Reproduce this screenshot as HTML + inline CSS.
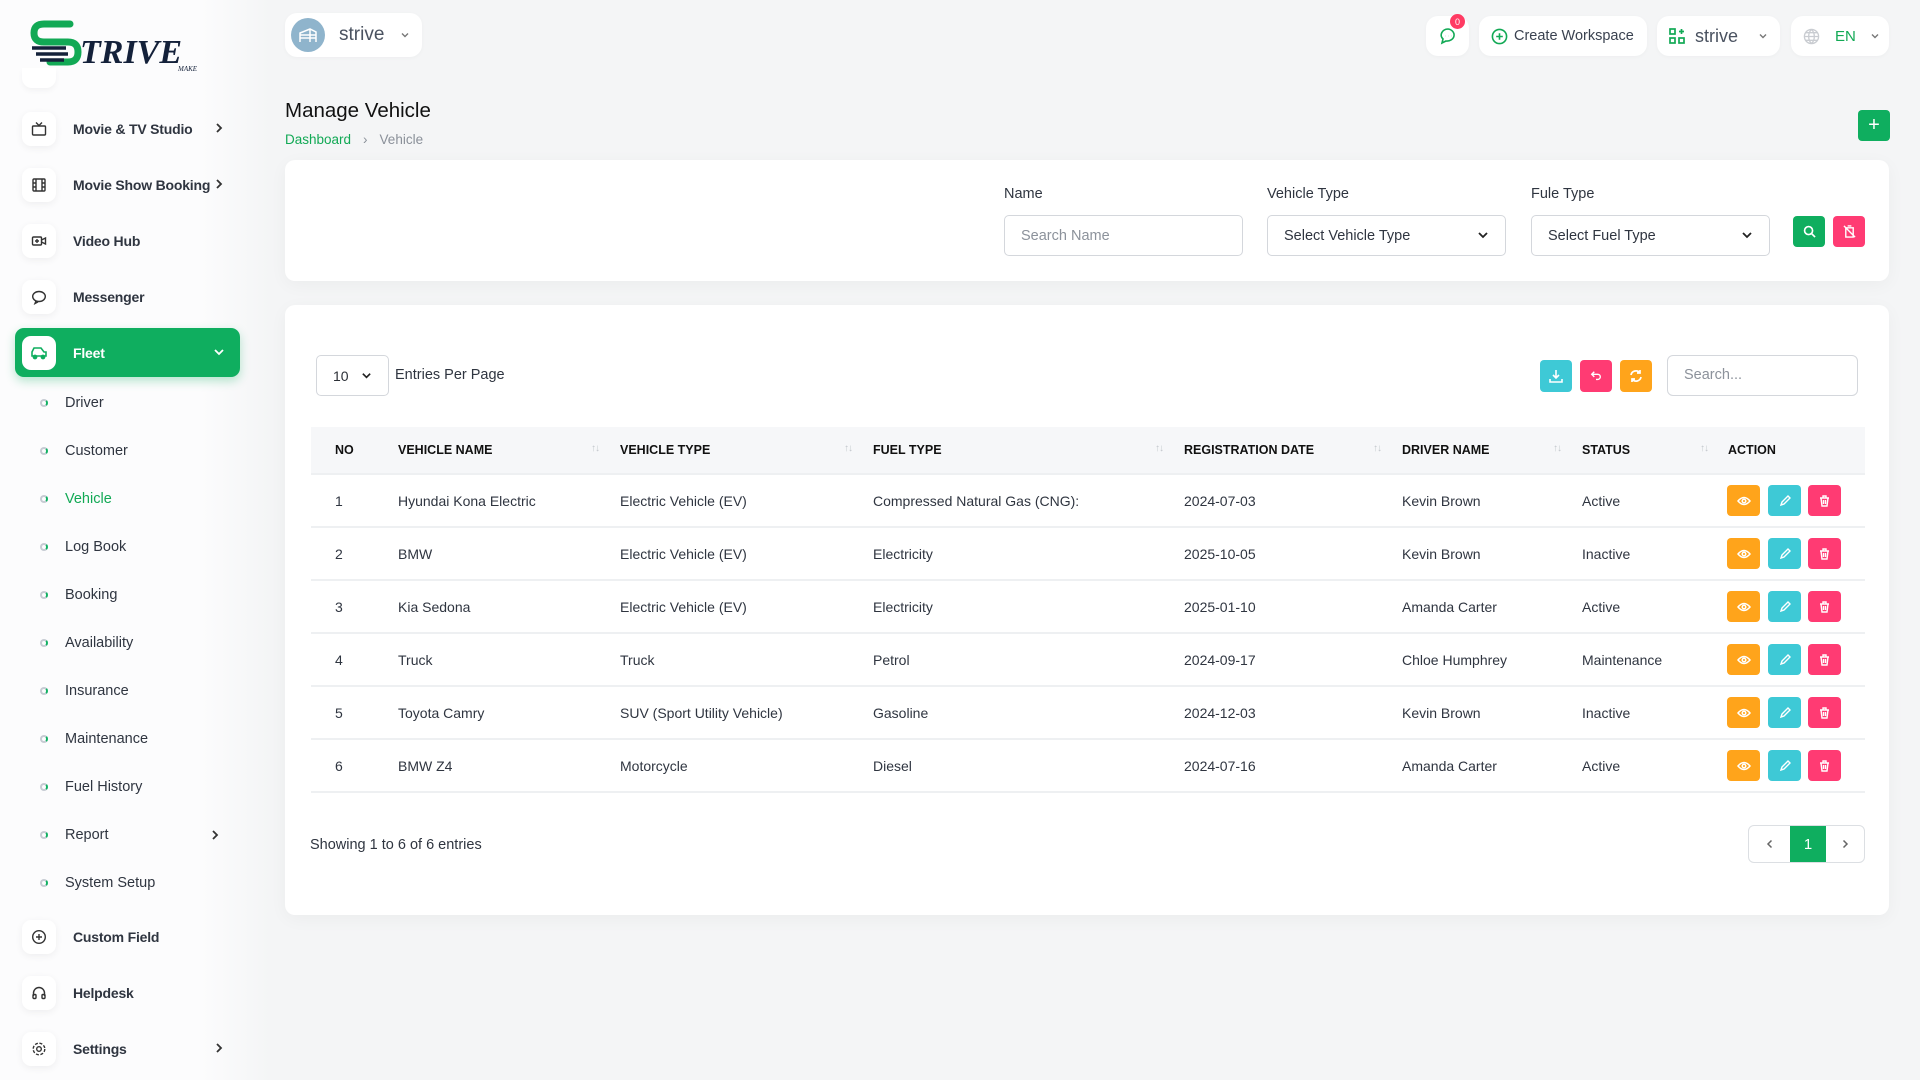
<!DOCTYPE html>
<html><head><meta charset="utf-8"><style>
*{box-sizing:border-box;margin:0;padding:0}
body{width:1920px;height:1080px;overflow:hidden;background:#f4f5f6;font-family:"Liberation Sans",sans-serif;color:#2b2f36;position:relative;font-size:14px}
.abs{position:absolute}
.side{position:absolute;left:0;top:0;width:270px;height:1080px;background:linear-gradient(to right,#fcfcfd 0,#fcfcfd 200px,#f4f5f6 270px)}
.logo{left:30px;top:18px}
.mi{position:absolute;left:22px;height:40px;display:flex;align-items:center;font-size:14px;font-weight:bold;color:#2f3540;letter-spacing:-0.2px}
.mi .ic{width:34px;height:34px;border-radius:9px;background:#fff;box-shadow:0 2px 8px rgba(0,0,0,.06);display:flex;align-items:center;justify-content:center;margin-right:17px}
.mi .ch{position:absolute;left:192px;top:12px}
.sub{position:absolute;left:40px;font-size:14.5px;color:#2f3540;display:flex;align-items:center}
.sub i{width:8px;height:8px;border:2px solid #c6cbd3;border-right-color:#11b063;border-radius:50%;margin-right:17px}
.card{position:absolute;background:#fff;border-radius:10px;box-shadow:0 4px 18px rgba(0,0,0,.04)}
.pill{position:absolute;top:16px;height:40px;background:#fff;border-radius:12px;display:flex;align-items:center;box-shadow:0 1px 4px rgba(0,0,0,.03)}
.btn{position:absolute;border-radius:4px;display:flex;align-items:center;justify-content:center}
.lbl{position:absolute;top:186px;font-size:14.5px;color:#2f3540}
.inp{position:absolute;top:215px;height:41px;width:239px;border:1px solid #d4d7dc;border-radius:5px;display:flex;align-items:center;padding-left:16px;font-size:14.5px;color:#2f3540}
.th{position:absolute;top:443px;font-size:12.5px;font-weight:bold;color:#111}
.sort{position:absolute;top:443px;font-size:10px;color:#c3c7cd;letter-spacing:-1px}
.row{position:absolute;left:311px;width:1554px;border-bottom:2px solid #eef0f2;height:53px}
.td{position:absolute;font-size:14px;color:#2f3540;top:18px}
.ab{position:absolute;top:10px;width:33px;height:31px;border-radius:4px;display:flex;align-items:center;justify-content:center}
</style></head><body>
<div class="side"></div>
<div class="abs logo">
<svg width="180" height="54" viewBox="0 0 180 54"><path d="M40 6 H14 Q4 6 4 15 Q4 24 14 24 H38 Q48 24 48 34 Q48 44 38 44 H20" fill="none" stroke="#12a955" stroke-width="7" stroke-linecap="round"/><path d="M2 30h34M6 36h32M10 42h24" stroke="#14213a" stroke-width="3.5"/><text x="50" y="45" font-family="Liberation Serif" font-style="italic" font-weight="bold" font-size="34" fill="#14213a" letter-spacing="0">TRIVE</text><text x="148" y="53" font-family="Liberation Serif" font-style="italic" font-size="7" fill="#14213a">MAKE</text></svg>
</div>
<div class="abs" style="left:22px;top:68px;width:34px;height:20px;background:#fff;border-radius:0 0 10px 10px;box-shadow:0 3px 6px rgba(0,0,0,.04)"></div>

<div class="mi" style="top:109px"><div class="ic"><svg width="16" height="16" viewBox="0 0 16 16" fill="none" stroke="#333" stroke-width="1.4"><rect x="1.5" y="5" width="13" height="9" rx="1"/><path d="M5 1.5l3 3 3-3"/></svg></div>Movie &amp; TV Studio<svg class="ch" width="10" height="14" viewBox="0 0 10 14" fill="none" stroke="#333" stroke-width="1.8"><path d="M3 3l4 4-4 4"/></svg></div>
<div class="mi" style="top:165px"><div class="ic"><svg width="16" height="16" viewBox="0 0 16 16" fill="none" stroke="#333" stroke-width="1.4"><rect x="2" y="2" width="12" height="12" rx="1"/><path d="M5 2v12M11 2v12M2 6h3M2 10h3M11 6h3M11 10h3"/></svg></div>Movie Show Booking<svg class="ch" width="10" height="14" viewBox="0 0 10 14" fill="none" stroke="#333" stroke-width="1.8"><path d="M3 3l4 4-4 4"/></svg></div>
<div class="mi" style="top:221px"><div class="ic"><svg width="16" height="16" viewBox="0 0 16 16" fill="none" stroke="#333" stroke-width="1.4"><rect x="1.5" y="4" width="9" height="8" rx="1"/><path d="M10.5 7l4-2v6l-4-2M6 6v4M4 8h4"/></svg></div>Video Hub</div>
<div class="mi" style="top:277px"><div class="ic"><svg width="16" height="16" viewBox="0 0 16 16" fill="none" stroke="#333" stroke-width="1.4"><ellipse cx="8" cy="7.5" rx="6.3" ry="5"/><path d="M5 12l-1 2.5 3-1.6"/></svg></div>Messenger</div>

<div class="abs" style="left:15px;top:328px;width:225px;height:49px;background:#0fae5f;border-radius:9px;box-shadow:0 4px 10px rgba(15,174,95,.3)"></div>
<div class="mi" style="top:333px;left:22px;color:#fff"><div class="ic" style="box-shadow:none"><svg width="18" height="16" viewBox="0 0 18 16" fill="none" stroke="#0fae5f" stroke-width="1.6"><path d="M2 11V7l2-4h7l3 4h2v4z"/><circle cx="5" cy="12" r="1.6" fill="#0fae5f"/><circle cx="13" cy="12" r="1.6" fill="#0fae5f"/></svg></div>Fleet<svg class="ch" style="left:190px" width="14" height="14" viewBox="0 0 14 14" fill="none" stroke="#fff" stroke-width="1.8"><path d="M3 5l4 4 4-4"/></svg></div>

<div class="sub" style="top:395px"><i></i>Driver</div>
<div class="sub" style="top:443px"><i></i>Customer</div>
<div class="sub" style="top:491px;color:#12a955"><i></i>Vehicle</div>
<div class="sub" style="top:539px"><i></i>Log Book</div>
<div class="sub" style="top:587px"><i></i>Booking</div>
<div class="sub" style="top:635px"><i></i>Availability</div>
<div class="sub" style="top:683px"><i></i>Insurance</div>
<div class="sub" style="top:731px"><i></i>Maintenance</div>
<div class="sub" style="top:779px"><i></i>Fuel History</div>
<div class="sub" style="top:827px"><i></i>Report<svg style="position:absolute;left:170px;top:1px" width="10" height="14" viewBox="0 0 10 14" fill="none" stroke="#333" stroke-width="1.8"><path d="M3 3l4 4-4 4"/></svg></div>
<div class="sub" style="top:875px"><i></i>System Setup</div>

<div class="mi" style="top:917px"><div class="ic"><svg width="16" height="16" viewBox="0 0 16 16" fill="none" stroke="#333" stroke-width="1.4"><circle cx="8" cy="8" r="6.3"/><path d="M8 5v6M5 8h6"/></svg></div>Custom Field</div>
<div class="mi" style="top:973px"><div class="ic"><svg width="16" height="16" viewBox="0 0 16 16" fill="none" stroke="#333" stroke-width="1.4"><path d="M2.5 11V8a5.5 5.5 0 0111 0v3"/><rect x="2" y="9.5" width="3" height="4" rx="1"/><rect x="11" y="9.5" width="3" height="4" rx="1"/></svg></div>Helpdesk</div>
<div class="mi" style="top:1029px"><div class="ic"><svg width="16" height="16" viewBox="0 0 16 16" fill="none" stroke="#333" stroke-width="1.4"><circle cx="8" cy="8" r="2.3"/><circle cx="8" cy="8" r="5.8" stroke-dasharray="3 1.6"/></svg></div>Settings<svg class="ch" width="10" height="14" viewBox="0 0 10 14" fill="none" stroke="#333" stroke-width="1.8"><path d="M3 3l4 4-4 4"/></svg></div>

<!-- header -->
<div class="pill" style="left:285px;top:13px;width:137px;height:44px;border-radius:12px">
<div style="width:34px;height:34px;border-radius:50%;background:#8fb4cc;margin-left:6px;display:flex;align-items:center;justify-content:center"><svg width="20" height="16" viewBox="0 0 20 16" fill="none" stroke="#fff" stroke-width="1.5"><path d="M2 15V6l10-4 6 3v10M2 8h16M2 11h16M12 2v13"/></svg></div>
<span style="margin-left:14px;font-size:19px;color:#4a5260">strive</span><svg style="margin-left:16px" width="10" height="10" viewBox="0 0 10 10" fill="none" stroke="#777" stroke-width="1.4"><path d="M2 3.5l3 3 3-3"/></svg></div>

<div class="pill" style="left:1426px;width:43px;justify-content:center"><svg width="18" height="18" viewBox="0 0 18 18" fill="none" stroke="#12a955" stroke-width="1.6"><path d="M9 2a7 6 0 00-5 10l-1 4 4-2a7 6 0 102-12z"/><path d="M6 9h.1M9 9h.1M12 9h.1" stroke-width="2"/></svg>
<div style="position:absolute;left:24px;top:-2px;width:15px;height:15px;border-radius:50%;background:#ff3b63;color:#fff;font-size:9px;display:flex;align-items:center;justify-content:center">0</div></div>
<div class="pill" style="left:1479px;width:168px;padding-left:12px;font-size:14.5px;color:#3a4250"><svg width="17" height="17" viewBox="0 0 18 18" fill="none" stroke="#12a955" stroke-width="1.7" style="margin-right:6px"><circle cx="9" cy="9" r="7.5"/><path d="M9 5.5v7M5.5 9h7"/></svg>Create Workspace</div>
<div class="pill" style="left:1657px;width:123px;padding-left:12px;font-size:18px;color:#4a5260"><svg width="16" height="16" viewBox="0 0 16 16" fill="none" stroke="#12a955" stroke-width="1.7" style="margin-right:10px"><rect x="1" y="1" width="5" height="5"/><rect x="1" y="10" width="5" height="5"/><rect x="10" y="10" width="5" height="5"/><path d="M12.5 1v5M10 3.5h5"/></svg>strive<svg style="margin-left:20px" width="10" height="10" viewBox="0 0 10 10" fill="none" stroke="#777" stroke-width="1.4"><path d="M2 3.5l3 3 3-3"/></svg></div>
<div class="pill" style="left:1791px;width:98px;padding-left:12px"><svg width="17" height="17" viewBox="0 0 18 18" fill="none" stroke="#c9ccd1" stroke-width="1.4"><circle cx="9" cy="9" r="7.5"/><path d="M1.5 9h15M9 1.5c-4 4-4 11 0 15M9 1.5c4 4 4 11 0 15M3 5h12M3 13h12"/></svg><span style="margin-left:15px;color:#12a955;font-size:15px">EN</span><svg style="margin-left:14px" width="10" height="10" viewBox="0 0 10 10" fill="none" stroke="#777" stroke-width="1.4"><path d="M2 3.5l3 3 3-3"/></svg></div>

<div class="abs" style="left:285px;top:99px;font-size:20.5px;color:#111">Manage Vehicle</div>
<div class="abs" style="left:285px;top:132px;font-size:13.5px;color:#8a9099"><span style="color:#12a955">Dashboard</span><span style="margin:0 12px">›</span>Vehicle</div>
<div class="btn" style="left:1858px;top:110px;width:32px;height:31px;background:#0fae5f;color:#fff;font-size:20px">+</div>

<!-- filter -->
<div class="card" style="left:285px;top:160px;width:1604px;height:121px"></div>
<div class="lbl" style="left:1004px">Name</div>
<div class="lbl" style="left:1267px">Vehicle Type</div>
<div class="lbl" style="left:1531px">Fule Type</div>
<div class="inp" style="left:1004px;color:#8c929b">Search Name</div>
<div class="inp" style="left:1267px">Select Vehicle Type<span style="position:absolute;right:16px;top:13px"><svg width="12" height="12" viewBox="0 0 12 12" fill="none" stroke="#222" stroke-width="1.8"><path d="M2 4l4 4 4-4"/></svg></span></div>
<div class="inp" style="left:1531px">Select Fuel Type<span style="position:absolute;right:16px;top:13px"><svg width="12" height="12" viewBox="0 0 12 12" fill="none" stroke="#222" stroke-width="1.8"><path d="M2 4l4 4 4-4"/></svg></span></div>
<div class="btn" style="left:1793px;top:216px;width:32px;height:31px;background:#0fae5f"><svg width="13" height="13" viewBox="0 0 14 14" fill="none" stroke="#fff" stroke-width="1.8"><circle cx="6" cy="6" r="4.3"/><path d="M9 9l4 4"/></svg></div>
<div class="btn" style="left:1833px;top:216px;width:32px;height:31px;background:#ff3b73"><svg width="13" height="13" viewBox="0 0 14 14" fill="none" stroke="#fff" stroke-width="1.5"><path d="M3 3h8v10H3zM5 1h4M1 1l12 12"/></svg></div>

<!-- table card -->
<div class="card" style="left:285px;top:305px;width:1604px;height:610px"></div>
<div class="abs" style="left:316px;top:355px;width:73px;height:41px;border:1px solid #d4d7dc;border-radius:5px;font-size:14px;display:flex;align-items:center;padding-left:16px">10<svg style="margin-left:12px" width="11" height="11" viewBox="0 0 12 12" fill="none" stroke="#222" stroke-width="1.8"><path d="M2 4l4 4 4-4"/></svg></div>
<div class="abs" style="left:395px;top:367px;font-size:14.5px;color:#2f3540">Entries Per Page</div>
<div class="btn" style="left:1540px;top:360px;width:32px;height:32px;background:#3ec9d6"><svg width="14" height="14" viewBox="0 0 14 14" fill="none" stroke="#fff" stroke-width="1.6"><path d="M7 1v8M4 6l3 3 3-3M1 10v3h12v-3"/></svg></div>
<div class="btn" style="left:1580px;top:360px;width:32px;height:32px;background:#ff3b73"><svg width="12" height="12" viewBox="0 0 14 14" fill="none" stroke="#fff" stroke-width="1.6"><path d="M5 2L2 5l3 3M2 5h7a3 3 0 010 6H7"/></svg></div>
<div class="btn" style="left:1620px;top:360px;width:32px;height:32px;background:#ffa41b"><svg width="14" height="14" viewBox="0 0 14 14" fill="none" stroke="#fff" stroke-width="1.7"><path d="M2 6a5 5 0 019-2M12 8a5 5 0 01-9 2M11 1v3H8M3 13v-3h3"/></svg></div>
<div class="abs" style="left:1667px;top:355px;width:191px;height:41px;border:1px solid #d4d7dc;border-radius:6px;padding-left:16px;font-size:14.5px;color:#8c929b;line-height:39px">Search...</div>

<div class="abs" style="left:311px;top:427px;width:1554px;height:48px;background:#f6f7f9;border-bottom:2px solid #eef0f2"></div>
<div class="th" style="left:335px">NO</div>
<div class="th" style="left:398px">VEHICLE NAME</div><div class="sort" style="left:591px">↑↓</div>
<div class="th" style="left:620px">VEHICLE TYPE</div><div class="sort" style="left:844px">↑↓</div>
<div class="th" style="left:873px">FUEL TYPE</div><div class="sort" style="left:1155px">↑↓</div>
<div class="th" style="left:1184px">REGISTRATION DATE</div><div class="sort" style="left:1373px">↑↓</div>
<div class="th" style="left:1402px">DRIVER NAME</div><div class="sort" style="left:1553px">↑↓</div>
<div class="th" style="left:1582px">STATUS</div><div class="sort" style="left:1700px">↑↓</div>
<div class="th" style="left:1728px">ACTION</div>

<div class="row" style="top:475px"><div class="td" style="left:24px">1</div><div class="td" style="left:87px">Hyundai Kona Electric</div><div class="td" style="left:309px">Electric Vehicle (EV)</div><div class="td" style="left:562px">Compressed Natural Gas (CNG):</div><div class="td" style="left:873px">2024-07-03</div><div class="td" style="left:1091px">Kevin Brown</div><div class="td" style="left:1271px">Active</div>
<div class="ab" style="left:1416px;background:#ffa41b"><svg width="14" height="10" viewBox="0 0 14 10" fill="none" stroke="#fff" stroke-width="1.5"><path d="M1 5q6-7 12 0q-6 7-12 0z"/><circle cx="7" cy="5" r="1.8"/></svg></div><div class="ab" style="left:1457px;background:#3ec9d6"><svg width="12" height="12" viewBox="0 0 12 12" fill="none" stroke="#fff" stroke-width="1.4"><path d="M2 10l1-3 6-6 2 2-6 6z"/></svg></div><div class="ab" style="left:1497px;background:#ff3b73"><svg width="11" height="12" viewBox="0 0 11 12" fill="none" stroke="#fff" stroke-width="1.4"><path d="M1 3h9M4 3V1h3v2M2 3l1 8h5l1-8M4.5 5v4M6.5 5v4"/></svg></div></div>
<div class="row" style="top:528px"><div class="td" style="left:24px">2</div><div class="td" style="left:87px">BMW</div><div class="td" style="left:309px">Electric Vehicle (EV)</div><div class="td" style="left:562px">Electricity</div><div class="td" style="left:873px">2025-10-05</div><div class="td" style="left:1091px">Kevin Brown</div><div class="td" style="left:1271px">Inactive</div>
<div class="ab" style="left:1416px;background:#ffa41b"><svg width="14" height="10" viewBox="0 0 14 10" fill="none" stroke="#fff" stroke-width="1.5"><path d="M1 5q6-7 12 0q-6 7-12 0z"/><circle cx="7" cy="5" r="1.8"/></svg></div><div class="ab" style="left:1457px;background:#3ec9d6"><svg width="12" height="12" viewBox="0 0 12 12" fill="none" stroke="#fff" stroke-width="1.4"><path d="M2 10l1-3 6-6 2 2-6 6z"/></svg></div><div class="ab" style="left:1497px;background:#ff3b73"><svg width="11" height="12" viewBox="0 0 11 12" fill="none" stroke="#fff" stroke-width="1.4"><path d="M1 3h9M4 3V1h3v2M2 3l1 8h5l1-8M4.5 5v4M6.5 5v4"/></svg></div></div>
<div class="row" style="top:581px"><div class="td" style="left:24px">3</div><div class="td" style="left:87px">Kia Sedona</div><div class="td" style="left:309px">Electric Vehicle (EV)</div><div class="td" style="left:562px">Electricity</div><div class="td" style="left:873px">2025-01-10</div><div class="td" style="left:1091px">Amanda Carter</div><div class="td" style="left:1271px">Active</div>
<div class="ab" style="left:1416px;background:#ffa41b"><svg width="14" height="10" viewBox="0 0 14 10" fill="none" stroke="#fff" stroke-width="1.5"><path d="M1 5q6-7 12 0q-6 7-12 0z"/><circle cx="7" cy="5" r="1.8"/></svg></div><div class="ab" style="left:1457px;background:#3ec9d6"><svg width="12" height="12" viewBox="0 0 12 12" fill="none" stroke="#fff" stroke-width="1.4"><path d="M2 10l1-3 6-6 2 2-6 6z"/></svg></div><div class="ab" style="left:1497px;background:#ff3b73"><svg width="11" height="12" viewBox="0 0 11 12" fill="none" stroke="#fff" stroke-width="1.4"><path d="M1 3h9M4 3V1h3v2M2 3l1 8h5l1-8M4.5 5v4M6.5 5v4"/></svg></div></div>
<div class="row" style="top:634px"><div class="td" style="left:24px">4</div><div class="td" style="left:87px">Truck</div><div class="td" style="left:309px">Truck</div><div class="td" style="left:562px">Petrol</div><div class="td" style="left:873px">2024-09-17</div><div class="td" style="left:1091px">Chloe Humphrey</div><div class="td" style="left:1271px">Maintenance</div>
<div class="ab" style="left:1416px;background:#ffa41b"><svg width="14" height="10" viewBox="0 0 14 10" fill="none" stroke="#fff" stroke-width="1.5"><path d="M1 5q6-7 12 0q-6 7-12 0z"/><circle cx="7" cy="5" r="1.8"/></svg></div><div class="ab" style="left:1457px;background:#3ec9d6"><svg width="12" height="12" viewBox="0 0 12 12" fill="none" stroke="#fff" stroke-width="1.4"><path d="M2 10l1-3 6-6 2 2-6 6z"/></svg></div><div class="ab" style="left:1497px;background:#ff3b73"><svg width="11" height="12" viewBox="0 0 11 12" fill="none" stroke="#fff" stroke-width="1.4"><path d="M1 3h9M4 3V1h3v2M2 3l1 8h5l1-8M4.5 5v4M6.5 5v4"/></svg></div></div>
<div class="row" style="top:687px"><div class="td" style="left:24px">5</div><div class="td" style="left:87px">Toyota Camry</div><div class="td" style="left:309px">SUV (Sport Utility Vehicle)</div><div class="td" style="left:562px">Gasoline</div><div class="td" style="left:873px">2024-12-03</div><div class="td" style="left:1091px">Kevin Brown</div><div class="td" style="left:1271px">Inactive</div>
<div class="ab" style="left:1416px;background:#ffa41b"><svg width="14" height="10" viewBox="0 0 14 10" fill="none" stroke="#fff" stroke-width="1.5"><path d="M1 5q6-7 12 0q-6 7-12 0z"/><circle cx="7" cy="5" r="1.8"/></svg></div><div class="ab" style="left:1457px;background:#3ec9d6"><svg width="12" height="12" viewBox="0 0 12 12" fill="none" stroke="#fff" stroke-width="1.4"><path d="M2 10l1-3 6-6 2 2-6 6z"/></svg></div><div class="ab" style="left:1497px;background:#ff3b73"><svg width="11" height="12" viewBox="0 0 11 12" fill="none" stroke="#fff" stroke-width="1.4"><path d="M1 3h9M4 3V1h3v2M2 3l1 8h5l1-8M4.5 5v4M6.5 5v4"/></svg></div></div>
<div class="row" style="top:740px"><div class="td" style="left:24px">6</div><div class="td" style="left:87px">BMW Z4</div><div class="td" style="left:309px">Motorcycle</div><div class="td" style="left:562px">Diesel</div><div class="td" style="left:873px">2024-07-16</div><div class="td" style="left:1091px">Amanda Carter</div><div class="td" style="left:1271px">Active</div>
<div class="ab" style="left:1416px;background:#ffa41b"><svg width="14" height="10" viewBox="0 0 14 10" fill="none" stroke="#fff" stroke-width="1.5"><path d="M1 5q6-7 12 0q-6 7-12 0z"/><circle cx="7" cy="5" r="1.8"/></svg></div><div class="ab" style="left:1457px;background:#3ec9d6"><svg width="12" height="12" viewBox="0 0 12 12" fill="none" stroke="#fff" stroke-width="1.4"><path d="M2 10l1-3 6-6 2 2-6 6z"/></svg></div><div class="ab" style="left:1497px;background:#ff3b73"><svg width="11" height="12" viewBox="0 0 11 12" fill="none" stroke="#fff" stroke-width="1.4"><path d="M1 3h9M4 3V1h3v2M2 3l1 8h5l1-8M4.5 5v4M6.5 5v4"/></svg></div></div>

<div class="abs" style="left:310px;top:837px;font-size:14.5px;color:#2f3540">Showing 1 to 6 of 6 entries</div>
<div class="abs" style="left:1748px;top:825px;width:117px;height:38px;border:1px solid #dcdfe3;border-radius:6px;display:flex">
<div style="width:41px;display:flex;align-items:center;justify-content:center"><svg width="10" height="12" viewBox="0 0 10 12" fill="none" stroke="#666" stroke-width="1.5"><path d="M6.5 2.5L3 6l3.5 3.5"/></svg></div>
<div style="width:36px;background:#0fae5f;color:#fff;display:flex;align-items:center;justify-content:center;font-size:15px">1</div>
<div style="flex:1;display:flex;align-items:center;justify-content:center"><svg width="10" height="12" viewBox="0 0 10 12" fill="none" stroke="#666" stroke-width="1.5"><path d="M3.5 2.5L7 6l-3.5 3.5"/></svg></div></div>
</body></html>
